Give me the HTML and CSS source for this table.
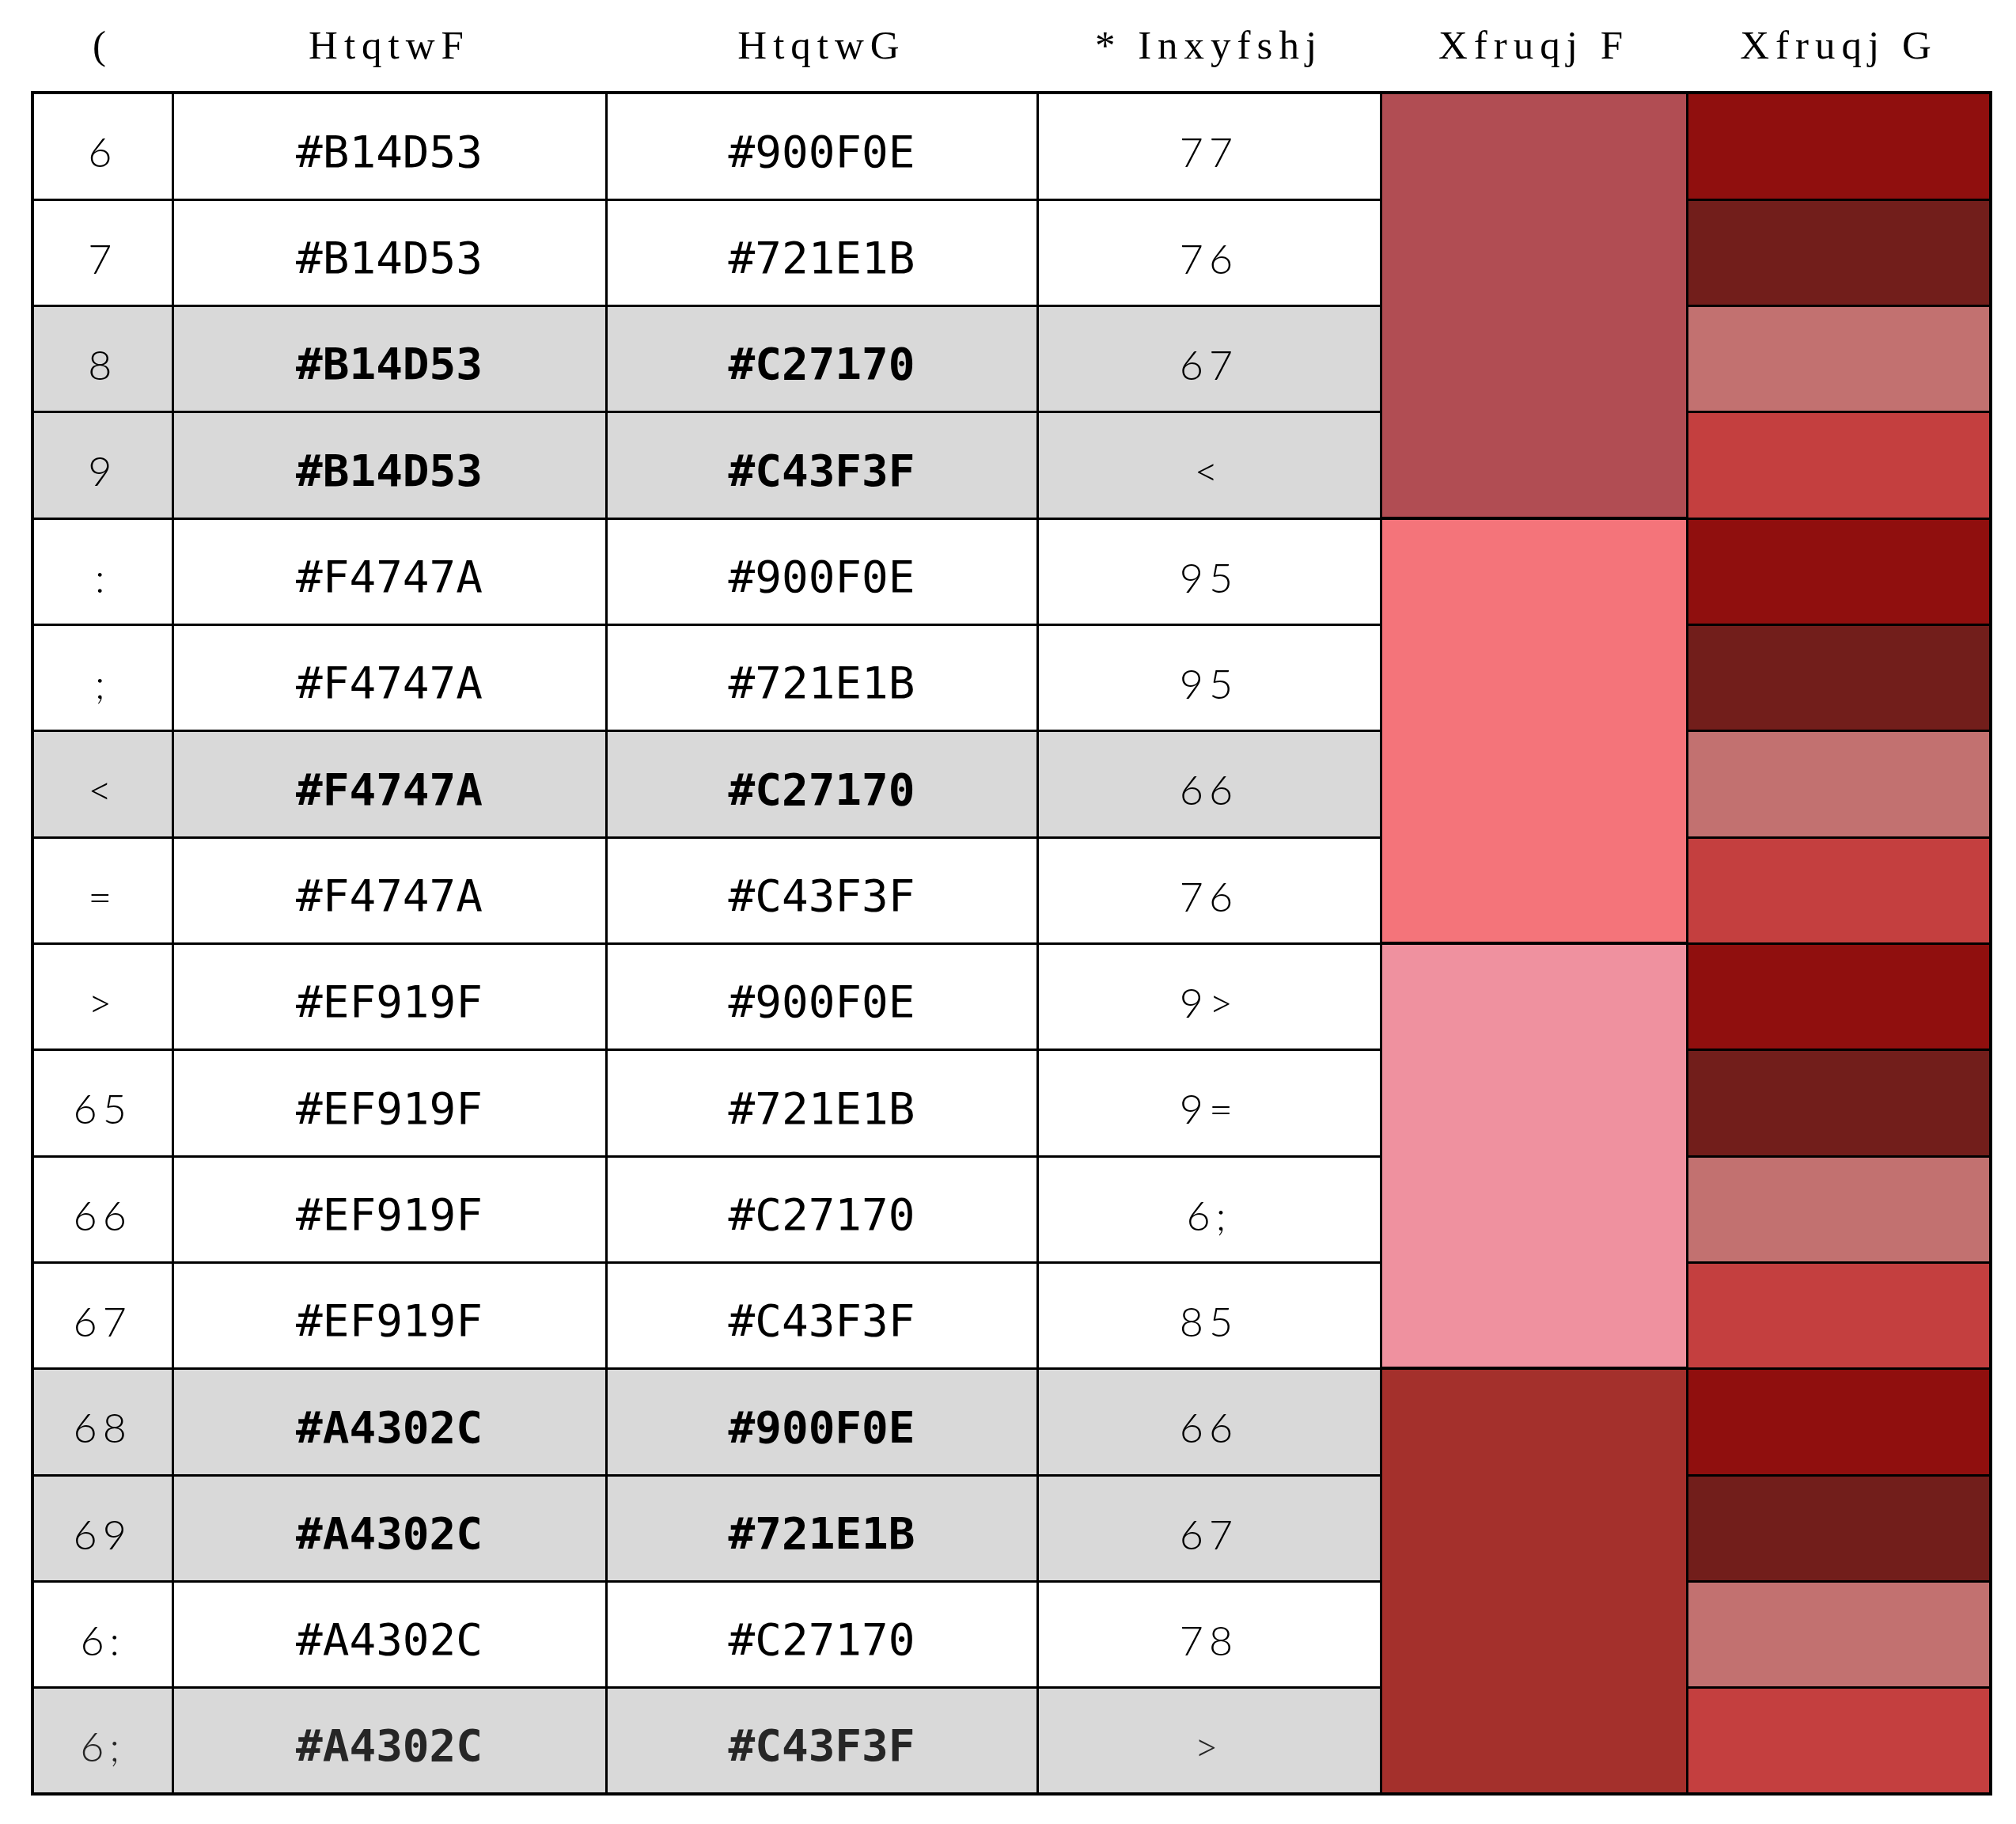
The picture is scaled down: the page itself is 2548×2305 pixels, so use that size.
FILE: index.html
```html
<!DOCTYPE html>
<html lang="en">
<head>
    <meta charset="UTF-8">
    <meta name="viewport" content="width=device-width, initial-scale=1.0">
    <title>Color Samples</title>
    <link rel="stylesheet" href="styles.css">
</head>
<body>
    <div class="page">
        <table class="swatch-table">
            <colgroup>
                <col class="col-num">
                <col class="col-a">
                <col class="col-b">
                <col class="col-dist">
                <col class="col-sa">
                <col class="col-sb">
            </colgroup>
            <thead>
                <tr>
                    <th>(</th>
                    <th>HtqtwF</th>
                    <th>HtqtwG</th>
                    <th>* Inxyfshj</th>
                    <th>Xfruqj F</th>
                    <th>Xfruqj G</th>
                </tr>
            </thead>
            <tbody>
                <!-- group 1 -->
                <tr>
                    <td class="num">6</td>
                    <td class="hex">#B14D53</td>
                    <td class="hex">#900F0E</td>
                    <td class="num">77</td>
                    <td class="swatch" rowspan="4" style="background-color: #B14D53;"></td>
                    <td class="swatch" style="background-color: #900F0E;"></td>
                </tr>
                <tr>
                    <td class="num">7</td>
                    <td class="hex">#B14D53</td>
                    <td class="hex">#721E1B</td>
                    <td class="num">76</td>
                    <td class="swatch" style="background-color: #721E1B;"></td>
                </tr>
                <tr class="shaded">
                    <td class="num">8</td>
                    <td class="hex">#B14D53</td>
                    <td class="hex">#C27170</td>
                    <td class="num">67</td>
                    <td class="swatch" style="background-color: #C27170;"></td>
                </tr>
                <tr class="shaded">
                    <td class="num">9</td>
                    <td class="hex">#B14D53</td>
                    <td class="hex">#C43F3F</td>
                    <td class="num">&lt;</td>
                    <td class="swatch" style="background-color: #C43F3F;"></td>
                </tr>

                <!-- group 2 -->
                <tr>
                    <td class="num">:</td>
                    <td class="hex">#F4747A</td>
                    <td class="hex">#900F0E</td>
                    <td class="num">95</td>
                    <td class="swatch" rowspan="4" style="background-color: #F4747A;"></td>
                    <td class="swatch" style="background-color: #900F0E;"></td>
                </tr>
                <tr>
                    <td class="num">;</td>
                    <td class="hex">#F4747A</td>
                    <td class="hex">#721E1B</td>
                    <td class="num">95</td>
                    <td class="swatch" style="background-color: #721E1B;"></td>
                </tr>
                <tr class="shaded">
                    <td class="num">&lt;</td>
                    <td class="hex">#F4747A</td>
                    <td class="hex">#C27170</td>
                    <td class="num">66</td>
                    <td class="swatch" style="background-color: #C27170;"></td>
                </tr>
                <tr>
                    <td class="num">=</td>
                    <td class="hex">#F4747A</td>
                    <td class="hex">#C43F3F</td>
                    <td class="num">76</td>
                    <td class="swatch" style="background-color: #C43F3F;"></td>
                </tr>

                <!-- group 3 -->
                <tr>
                    <td class="num">&gt;</td>
                    <td class="hex">#EF919F</td>
                    <td class="hex">#900F0E</td>
                    <td class="num">9&gt;</td>
                    <td class="swatch" rowspan="4" style="background-color: #EF919F;"></td>
                    <td class="swatch" style="background-color: #900F0E;"></td>
                </tr>
                <tr>
                    <td class="num">65</td>
                    <td class="hex">#EF919F</td>
                    <td class="hex">#721E1B</td>
                    <td class="num">9=</td>
                    <td class="swatch" style="background-color: #721E1B;"></td>
                </tr>
                <tr>
                    <td class="num">66</td>
                    <td class="hex">#EF919F</td>
                    <td class="hex">#C27170</td>
                    <td class="num">6;</td>
                    <td class="swatch" style="background-color: #C27170;"></td>
                </tr>
                <tr>
                    <td class="num">67</td>
                    <td class="hex">#EF919F</td>
                    <td class="hex">#C43F3F</td>
                    <td class="num">85</td>
                    <td class="swatch" style="background-color: #C43F3F;"></td>
                </tr>

                <!-- group 4 -->
                <tr class="shaded">
                    <td class="num">68</td>
                    <td class="hex">#A4302C</td>
                    <td class="hex">#900F0E</td>
                    <td class="num">66</td>
                    <td class="swatch" rowspan="4" style="background-color: #A4302C;"></td>
                    <td class="swatch" style="background-color: #900F0E;"></td>
                </tr>
                <tr class="shaded">
                    <td class="num">69</td>
                    <td class="hex">#A4302C</td>
                    <td class="hex">#721E1B</td>
                    <td class="num">67</td>
                    <td class="swatch" style="background-color: #721E1B;"></td>
                </tr>
                <tr>
                    <td class="num">6:</td>
                    <td class="hex">#A4302C</td>
                    <td class="hex">#C27170</td>
                    <td class="num">78</td>
                    <td class="swatch" style="background-color: #C27170;"></td>
                </tr>
                <tr class="shaded last">
                    <td class="num">6;</td>
                    <td class="hex">#A4302C</td>
                    <td class="hex">#C43F3F</td>
                    <td class="num">&gt;</td>
                    <td class="swatch" style="background-color: #C43F3F;"></td>
                </tr>
            </tbody>
        </table>
    </div>
</body>
</html>
```

FILE: styles.css
```css
body {
    margin: 0;
    background: #fff;
    color: #000;
    font-family: "Liberation Serif", serif;
}

.page {
    padding: 0 32px 0 39px;
}

.swatch-table {
    border-collapse: collapse;
    table-layout: fixed;
    width: 2475px;
}

.col-num  { width: 177px; }
.col-a    { width: 548px; }
.col-b    { width: 545px; }
.col-dist { width: 434px; }
.col-sa   { width: 387px; }
.col-sb   { width: 384px; }

/* header sits above the grid, no borders */
.swatch-table th {
    height: 113px;
    padding: 0 0 2px 0;
    font-family: "Liberation Serif", serif;
    font-weight: normal;
    font-size: 51px;
    letter-spacing: 8px;
    text-align: center;
    vertical-align: middle;
}

.swatch-table tbody tr {
    height: 134px;
}

.swatch-table tbody tr:nth-child(3n+1) {
    height: 135px;
}

.swatch-table td {
    border: 3px solid #000;
    padding: 13px 0 0 0;
    text-align: center;
    vertical-align: middle;
    background-color: #fff;
}

.swatch-table tbody tr:first-child td {
    border-top-width: 4px;
}

.swatch-table tbody tr:last-child td,
.swatch-table td[rowspan] {
    border-bottom-width: 4px;
}

.swatch-table td:first-child {
    border-left-width: 4px;
}

.swatch-table td:last-child {
    border-right-width: 4px;
}

.num {
    font-family: Lato, "Noto Sans", sans-serif;
    font-weight: 300;
    font-size: 52px;
    letter-spacing: 7px;
}

.hex {
    font-family: "DejaVu Sans Mono", monospace;
    font-size: 56px;
}

.shaded td {
    background-color: #d9d9d9;
}

.shaded .hex {
    font-weight: bold;
}

.last td {
    color: #262626;
}

.swatch-table td.swatch {
    padding: 0;
}
```
